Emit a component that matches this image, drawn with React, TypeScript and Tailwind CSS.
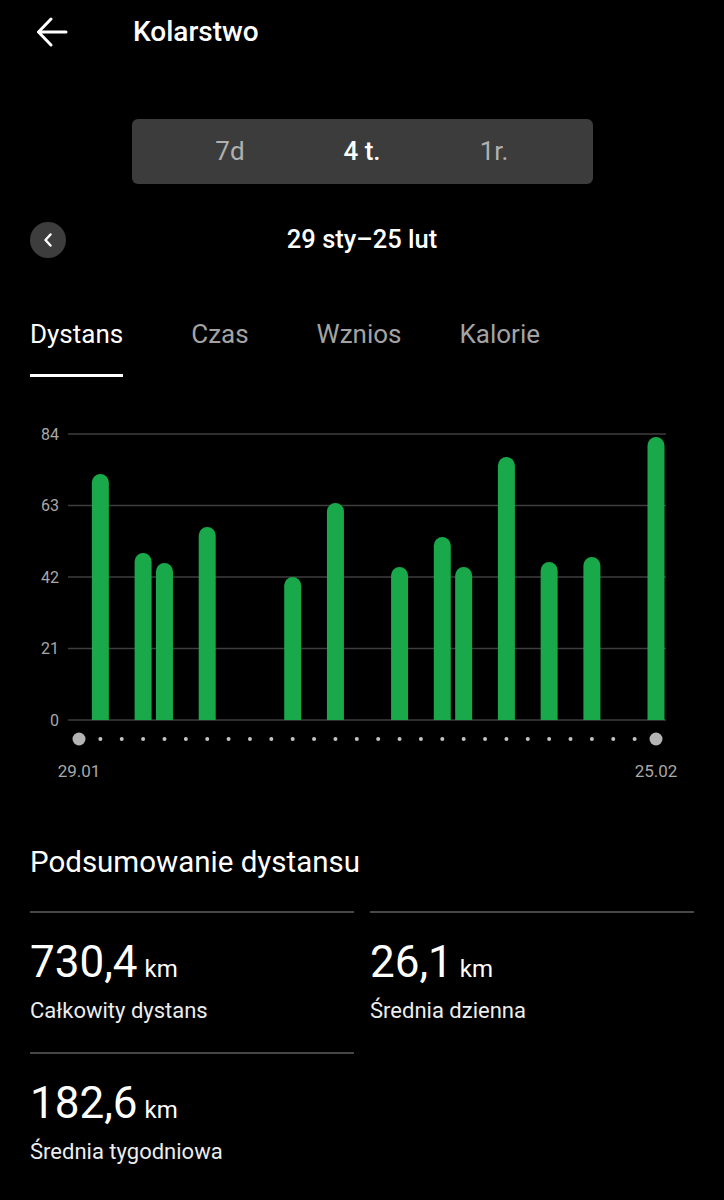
import React from "react";

type Bar = { day: number; top: number };

// bar tops in page px (baseline at 720)
const bars: Bar[] = [
    { day: 1, top: 474 },
    { day: 3, top: 553 },
    { day: 4, top: 563 },
    { day: 6, top: 527 },
    { day: 10, top: 577 },
    { day: 12, top: 503 },
    { day: 15, top: 567 },
    { day: 17, top: 537 },
    { day: 18, top: 567 },
    { day: 20, top: 457 },
    { day: 22, top: 562 },
    { day: 24, top: 557 },
    { day: 27, top: 437 },
];

const gridLines = [
    { label: "84", y: 434 },
    { label: "63", y: 505.5 },
    { label: "42", y: 577 },
    { label: "21", y: 648.5 },
    { label: "0", y: 720 },
];

const dayX = (i: number) => 79 + i * ((656 - 79) / 27);

const summary = [
    { value: "730,4", label: "Całkowity dystans" },
    { value: "26,1", label: "Średnia dzienna" },
    { value: "182,6", label: "Średnia tygodniowa" },
];

function Chart() {
    const w = 17;
    return (
        <svg width={724} height={413} viewBox="0 377 724 413" className="block">
            {gridLines.map((g) => (
                <g key={g.label}>
                    <line x1={68} x2={666} y1={g.y} y2={g.y} stroke="#3e3e3e" strokeWidth={1.5} />
                    <text x={59} y={g.y + 5.5} textAnchor="end" fill="#a8a8a8" fontSize={16} fontFamily="Roboto, sans-serif">
                        {g.label}
                    </text>
                </g>
            ))}
            {bars.map((b) => {
                const cx = dayX(b.day);
                const r = w / 2;
                return (
                    <path
                        key={b.day}
                        d={`M${cx - r},720 V${b.top + r} A${r} ${r} 0 0 1 ${cx + r},${b.top + r} V720 Z`}
                        fill="#19a84a"
                    />
                );
            })}
            {Array.from({ length: 28 }).map((_, i) => {
                const big = i === 0 || i === 27;
                return <circle key={i} cx={dayX(i)} cy={739} r={big ? 6.5 : 2} fill={big ? "#b4b4b4" : "#c4c4c4"} />;
            })}
            <text x={79} y={777} textAnchor="middle" fill="#a8a8a8" fontSize={17} fontFamily="Roboto, sans-serif">29.01</text>
            <text x={656} y={777} textAnchor="middle" fill="#a8a8a8" fontSize={17} fontFamily="Roboto, sans-serif">25.02</text>
        </svg>
    );
}

export default function App() {
    return (
        <div className="w-[724px] h-[1200px] bg-black text-white font-['Roboto',sans-serif] overflow-hidden">
            {/* Header */}
            <div className="flex items-center h-16">
                <svg width="32" height="30" viewBox="0 0 32 30" className="ml-[36px]" fill="none" stroke="white" strokeWidth="3" strokeLinecap="round" strokeLinejoin="round">
                    <path d="M30 15H3" />
                    <path d="M15 2 2.5 15 15 28" />
                </svg>
                <h1 className="ml-[65px] text-[28px] leading-none font-medium">Kolarstwo</h1>
            </div>

            {/* Range switch */}
            <div className="mt-[55px] mx-auto w-[461px] h-[65px] rounded-md bg-[#3c3c3c] flex items-center justify-center">
                <div className="w-[132px] text-center text-[26px] text-[#b0b0b0]">7d</div>
                <div className="w-[132px] text-center text-[26px] font-medium text-white">4 t.</div>
                <div className="w-[132px] text-center text-[26px] text-[#b0b0b0]">1r.</div>
            </div>

            {/* Date row */}
            <div className="relative mt-[38px] h-9 flex items-center justify-center">
                <div className="absolute left-[30px] top-0 w-9 h-9 rounded-full bg-[#3d3d3d] flex items-center justify-center">
                    <svg width="10" height="14" viewBox="0 0 10 14" fill="none" stroke="white" strokeWidth="2.4" strokeLinecap="round" strokeLinejoin="round">
                        <path d="M7.5 1.5 2.5 7l5 5.5" />
                    </svg>
                </div>
                <span className="text-[25.5px] font-medium leading-none">29 sty–25 lut</span>
            </div>

            {/* Tabs */}
            <div className="mt-[61px] px-[30px] flex gap-[68px] items-start">
                <div className="flex flex-col">
                    <span className="text-[26px] leading-[30px] text-white">Dystans</span>
                    <div className="mt-[25px] h-[3px] bg-white" />
                </div>
                <span className="text-[26px] leading-[30px] text-[#a3a3a3]">Czas</span>
                <span className="text-[26px] leading-[30px] text-[#a3a3a3]">Wznios</span>
                <span className="-ml-[10px] text-[26px] leading-[30px] text-[#a3a3a3]">Kalorie</span>
            </div>

            <Chart />

            {/* Summary */}
            <div className="mt-[55px] px-[30px]">
                <h2 className="text-[29.5px] leading-[34px]">Podsumowanie dystansu</h2>
                <div className="mt-[32px] grid grid-cols-2 gap-x-4">
                    {summary.map((s) => (
                        <div key={s.label} className="border-t-2 border-[#474747] pt-[27px] pb-[28px]">
                            <div className="flex items-baseline">
                                <span className="text-[44px] leading-[44px]">{s.value}</span>
                                <span className="ml-[7px] text-[24px] leading-none">km</span>
                            </div>
                            <div className="mt-[14px] text-[22px] leading-[26px] text-[#ededed]">{s.label}</div>
                        </div>
                    ))}
                </div>
            </div>
        </div>
    );
}
